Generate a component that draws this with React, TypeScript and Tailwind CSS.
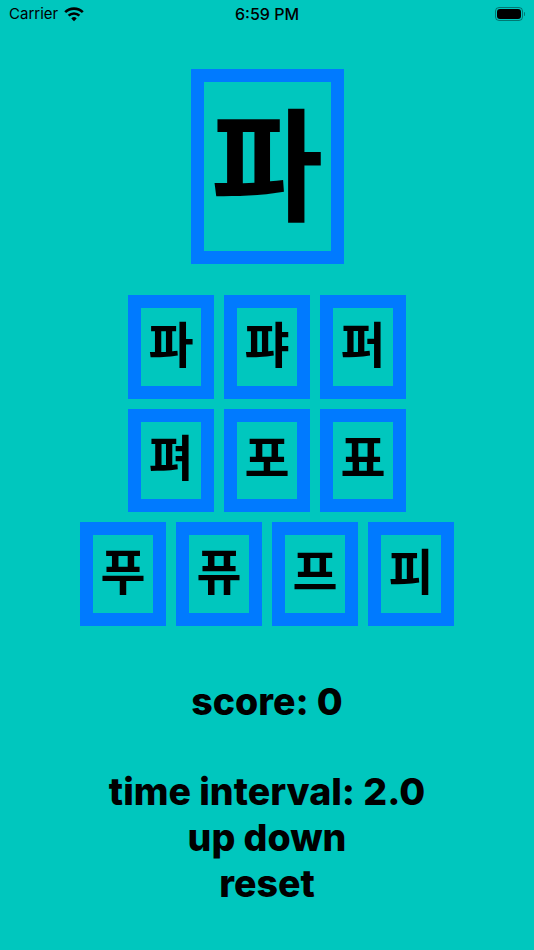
const koFont = "[font-family:'Noto_Sans_CJK_KR',sans-serif]";

function Tile({ text }: { text: string }) {
  return (
    <div className="flex h-[103.5px] w-[86px] items-center justify-center border-[13px] border-[#007aff] pb-[11px]">
      <span className={`${koFont} text-[49px] leading-none font-bold text-black`}>{text}</span>
    </div>
  );
}

function Row({ items }: { items: string[] }) {
  return (
    <div className="flex justify-center gap-[10px]">
      {items.map((t) => (
        <Tile key={t} text={t} />
      ))}
    </div>
  );
}

export default function App() {
  return (
    <div className="flex h-[950px] w-[534px] flex-col bg-[#00c7be] font-['Inter',sans-serif] text-black">
      {/* status bar */}
      <div className="grid h-[28px] grid-cols-3 items-center px-[9px] text-[15px]">
        <div className="flex items-center gap-[6px]">
          <span>Carrier</span>
          <svg width="20" height="15" viewBox="0 0 20 15" fill="none" stroke="black" strokeWidth="2.6">
            <path d="M1.2 5.2a12.5 12.5 0 0 1 17.6 0" />
            <path d="M4.6 8.6a7.8 7.8 0 0 1 10.8 0" />
            <path d="M10 14.2l-2.7-2.8a3.8 3.8 0 0 1 5.4 0z" fill="black" stroke="none" />
          </svg>
        </div>
        <div className="text-center text-[16px] font-medium whitespace-nowrap">6:59 PM</div>
        <div className="flex items-center justify-end">
          <div className="flex h-[14px] w-[28px] items-center rounded-[4px] border border-black/40 p-[1px]">
            <div className="h-full w-full rounded-[3px] bg-black" />
          </div>
          <div className="ml-[1px] h-[4px] w-[1.5px] rounded-r bg-black/40" />
        </div>
      </div>

      {/* current letter */}
      <div className="mt-[41px] flex justify-center">
        <div className="flex h-[195px] w-[153px] items-center justify-center border-[13px] border-[#007aff] pb-[18px]">
          <span className={`${koFont} text-[122px] leading-none font-bold text-black`}>파</span>
        </div>
      </div>

      {/* answer tiles */}
      <div className="mt-[31px] flex flex-col gap-[10px]">
        <Row items={["파", "퍄", "퍼"]} />
        <Row items={["펴", "포", "표"]} />
        <Row items={["푸", "퓨", "프", "피"]} />
      </div>

      <div className="mt-[53px] flex flex-col items-center text-[37.5px] leading-[46px] font-extrabold">
        <div>score: 0</div>
        <div className="mt-[44px]">time interval: 2.0</div>
        <div>up down</div>
        <div>reset</div>
      </div>
    </div>
  );
}
